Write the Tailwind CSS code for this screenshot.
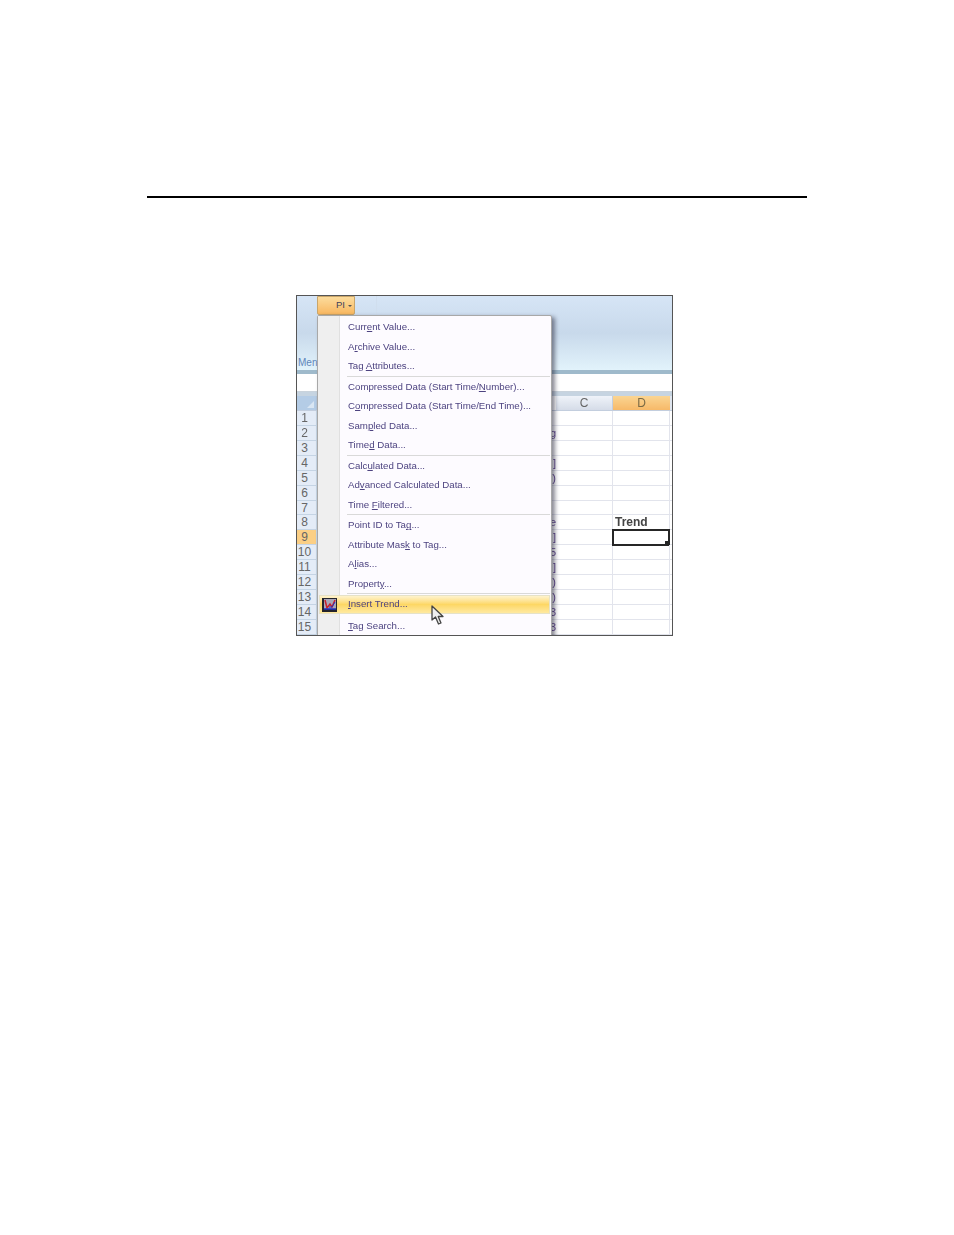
<!DOCTYPE html>
<html lang="en">
<head>
  <meta charset="UTF-8">
  <title>Insert Trend</title>
  <script src="https://cdn.jsdelivr.net/npm/@tailwindcss/browser@4"></script>
</head>
<body class="bg-white h-[1235px] overflow-hidden font-['Liberation_Sans',sans-serif]">
  <div class="pt-[196px] pl-[147px]">
    <div class="w-[660px] h-[2px] bg-black"></div>
  </div>

  <!-- Excel screenshot -->
  <div class="relative ml-[296px] mt-[97px] w-[377px] h-[341px] border border-[#555] overflow-hidden blur-[0.5px]">
    <!-- Ribbon -->
    <div class="h-[74px] bg-gradient-to-b from-[#d6e5f6] via-[#c8d9eb] to-[#e2f3fb] relative">
      <div class="flex h-[19px]">
        <div class="w-[20px]"></div>
        <div class="w-[38px] h-[19px] flex items-center justify-end gap-[3px] pr-[2px] border border-[#c9a56a] rounded-b-[2px] bg-gradient-to-b from-[#fcdc9c] to-[#f8b75f]">
          <span class="text-[9.500px] text-[#3f3f5a]">PI</span>
          <span class="w-0 h-0 border-l-[2px] border-r-[2px] border-t-[2px] border-l-transparent border-r-transparent border-t-[#555]"></span>
        </div>
        <div class="w-[22px] border-r border-[#d0deee]"></div>
      </div>
      <div class="pt-[42px] pl-[1px] text-[10px] leading-[12px] text-[#5f86bb]">Men</div>
    </div>
    <div class="h-[4px] bg-[#9fbacb]"></div>
    <div class="h-[18px] bg-white border-b border-[#c9d3dc]"></div>
    <div class="h-[4px] bg-[#c6d4e1]"></div>

    <!-- Grid -->
    <div class="flex h-[15px] border-b border-[#c3cede]">
      <div class="w-[20px] bg-[#b4cce6] relative border-r border-[#b4c6da]">
        <div class="absolute right-[2px] bottom-[2px] w-0 h-0 border-l-[7px] border-t-[7px] border-l-transparent border-t-transparent border-b-0 border-r-[0px] [border-bottom:7px_solid_#d9e6f3]"></div>
      </div>
      <div class="w-[239px]"></div>
      <div class="w-[57px] bg-gradient-to-b from-[#eff3f9] to-[#d5dce8] text-center text-[12px] leading-[14px] text-[#666] border-r border-[#c3cede]">C</div>
      <div class="w-[57px] bg-gradient-to-b from-[#fad592] to-[#f7b968] text-center text-[12px] leading-[14px] text-[#7a6a45]">D</div>
      <div class="flex-1 bg-[#dfe5ee]"></div>
    </div>
    <div id="rows"></div>

    <!-- Menu -->
    <div class="absolute left-[20px] top-[19px] w-[235px] h-[330px] bg-[#fdfbff] border border-[#a8a8a8] rounded-[2px] shadow-[3px_2px_4px_rgba(40,40,60,0.55)] text-[#4d4380]">
      <div class="absolute left-0 top-0 bottom-0 w-[22px] bg-[#efefef] border-r border-[#e0e0e0]"></div>
      <div id="menu" class="relative pt-[1px]"></div>
    </div>

    <!-- Cursor -->
    <svg class="absolute left-[134px] top-[309px]" width="14" height="21" viewBox="0 0 14 21">
      <path d="M1 1 L1 15 L4.500 12 L7.500 19 L10 18 L7.200 11.500 L12 11.500 Z" fill="#eeeeee" stroke="#444444" stroke-width="1.300" stroke-linejoin="round"/>
    </svg>
  </div>

  <script>
    const items = [
      ["Curr", "e", "nt Value..."],
      ["A", "r", "chive Value..."],
      ["Tag ", "A", "ttributes..."],
      null,
      ["Compressed Data (Start Time/", "N", "umber)..."],
      ["C", "o", "mpressed Data (Start Time/End Time)..."],
      ["Sam", "p", "led Data..."],
      ["Time", "d", " Data..."],
      null,
      ["Calc", "u", "lated Data..."],
      ["Ad", "v", "anced Calculated Data..."],
      ["Time ", "F", "iltered..."],
      null,
      ["Point ID to Ta", "g", "..."],
      ["Attribute Mas", "k", " to Tag..."],
      ["A", "l", "ias..."],
      ["Propert", "y", "..."],
      null,
      ["", "I", "nsert Trend...", true],
      "gap",
      ["", "T", "ag Search..."]
    ];
    const trendIcon = `<svg class="absolute left-[3px] top-[3px]" width="15" height="14" viewBox="0 0 15 14">
      <rect width="15" height="14" fill="#23232c"/>
      <rect x="2" y="1" width="12" height="10" fill="#a9a6b8"/>
      <path d="M3 2 L5 10 L8 6 L10 9 L13 2" fill="none" stroke="#c8202a" stroke-width="1.500"/>
      <path d="M2 11 H14" stroke="#2030c0" stroke-width="1.500"/>
      <path d="M7 9 L10 9 L13 4" fill="none" stroke="#2030c0" stroke-width="1"/>
    </svg>`;
    document.getElementById("menu").innerHTML = items.map(it => {
      if (it === "gap") return `<div class="h-[2px]"></div>`;
      if (!it) return `<div class="h-px ml-[29px] mr-px bg-[#d9d9d9]"></div>`;
      const text = `<span class="relative top-[1px]">${it[0]}<span class="underline">${it[1]}</span>${it[2]}</span>`;
      if (it[3]) {
        return `<div class="relative h-[19.5px] flex items-center pl-[30px] text-[9.700px] whitespace-nowrap">
          <div class="absolute left-[1px] right-[1px] top-[1px] bottom-0 border border-[#e6e2c8] bg-gradient-to-b from-[#fff3cd] via-[#fdd764] to-[#ffe9a0]"></div>
          <div class="absolute left-[1px] top-[1px] w-[21px] h-[19px]">${trendIcon}</div>
          ${text}
        </div>`;
      }
      return `<div class="h-[19.5px] flex items-center pl-[30px] text-[9.700px] whitespace-nowrap">${text}</div>`;
    }).join("");

    const bits = { 2: "g", 4: "]", 5: ")", 8: "e", 9: "]", 10: "5", 11: "]", 12: ")", 13: ")", 14: "3", 15: "3" };
    let html = "";
    for (let n = 1; n <= 15; n++) {
      const sel = n === 9;
      html += `<div class="flex h-[14.930px]">
        <div class="w-[20px] border-b border-r border-[#c5d4e4] text-center pr-[4px] text-[12px] leading-[14px] text-[#666] ${sel ? "bg-[#fbcf85]" : "bg-[#e4ecf7]"}">${n}</div>
        <div class="w-[239px] border-b border-[#e2e4ec] text-right text-[11px] leading-[14px] text-[#5b3f8a] overflow-hidden">${bits[n] || ""}</div>
        <div class="w-[57px] border-b border-r border-[#e2e4ec]"></div>
        <div class="w-[57px] border-b border-r border-[#e2e4ec] relative text-[12px] font-bold leading-[15px] text-[#444] pl-[2px]">${n === 8 ? "Trend" : ""}${sel ? `<div class="absolute -left-px -top-px w-[58px] h-[17px] border-2 border-[#262626]"><div class="absolute -right-[2px] -bottom-[2px] w-[5px] h-[5px] bg-[#262626]"></div></div>` : ""}</div>
        <div class="flex-1 border-b border-[#e2e4ec]"></div>
      </div>`;
    }
    document.getElementById("rows").innerHTML = html;
  </script>
</body>
</html>
